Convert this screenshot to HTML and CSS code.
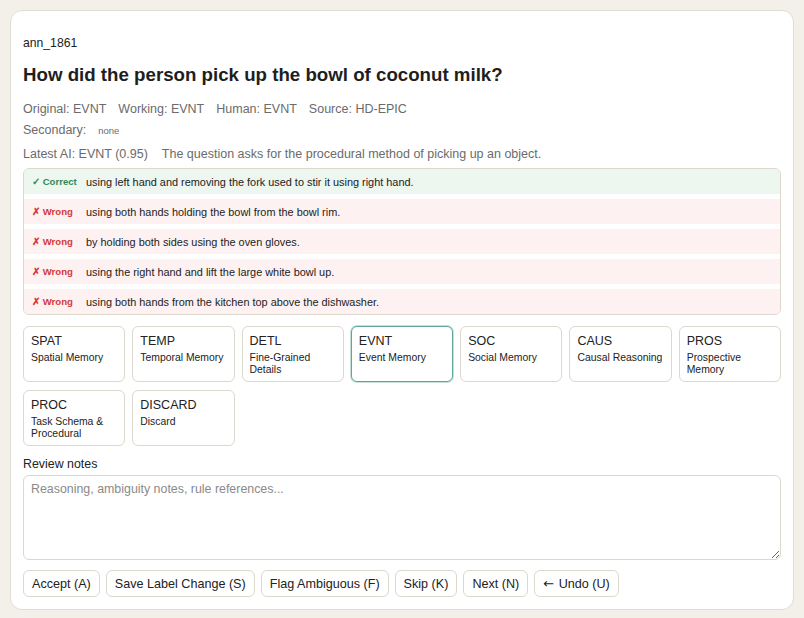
FILE: index.html
```html
<!DOCTYPE html>
<html lang="en">
<head>
<meta charset="utf-8">
<title>Review ann_1861</title>
<link rel="stylesheet" href="styles.css">
</head>
<body>
<main class="card">
  <div class="ann-id">ann_1861</div>
  <h1 class="question">How did the person pick up the bowl of coconut milk?</h1>
  <div class="meta">
    <span>Original: EVNT</span>
    <span>Working: EVNT</span>
    <span>Human: EVNT</span>
    <span>Source: HD-EPIC</span>
  </div>
  <div class="meta secondary">
    <span>Secondary:</span>
    <span class="none">none</span>
  </div>
  <div class="meta latest">
    <span>Latest AI: EVNT (0.95)</span>
    <span>The question asks for the procedural method of picking up an object.</span>
  </div>
  <div class="options">
    <div class="opt correct"><span class="tag">✓ Correct</span><span class="txt">using left hand and removing the fork used to stir it using right hand.</span></div>
    <div class="opt wrong"><span class="tag">✗ Wrong</span><span class="txt">using both hands holding the bowl from the bowl rim.</span></div>
    <div class="opt wrong"><span class="tag">✗ Wrong</span><span class="txt">by holding both sides using the oven gloves.</span></div>
    <div class="opt wrong"><span class="tag">✗ Wrong</span><span class="txt">using the right hand and lift the large white bowl up.</span></div>
    <div class="opt wrong"><span class="tag">✗ Wrong</span><span class="txt">using both hands from the kitchen top above the dishwasher.</span></div>
  </div>
  <div class="cats">
    <button class="cat"><span class="code">SPAT</span><span class="name">Spatial Memory</span></button>
    <button class="cat"><span class="code">TEMP</span><span class="name">Temporal Memory</span></button>
    <button class="cat"><span class="code">DETL</span><span class="name">Fine-Grained Details</span></button>
    <button class="cat selected"><span class="code">EVNT</span><span class="name">Event Memory</span></button>
    <button class="cat"><span class="code">SOC</span><span class="name">Social Memory</span></button>
    <button class="cat"><span class="code">CAUS</span><span class="name">Causal Reasoning</span></button>
    <button class="cat"><span class="code">PROS</span><span class="name">Prospective Memory</span></button>
    <button class="cat"><span class="code">PROC</span><span class="name">Task Schema &amp; Procedural</span></button>
    <button class="cat"><span class="code">DISCARD</span><span class="name">Discard</span></button>
  </div>
  <label class="notes-label" for="notes">Review notes</label>
  <textarea id="notes" class="notes" placeholder="Reasoning, ambiguity notes, rule references..."></textarea>
  <div class="actions">
    <button class="btn">Accept (A)</button>
    <button class="btn">Save Label Change (S)</button>
    <button class="btn">Flag Ambiguous (F)</button>
    <button class="btn">Skip (K)</button>
    <button class="btn">Next (N)</button>
    <button class="btn"><span class="arrow">←</span> Undo (U)</button>
  </div>
</main>
</body>
</html>
```
FILE: styles.css
```css
* { box-sizing: border-box; }
html, body { margin: 0; }
body {
  background: #f3f0ea;
  font-family: "Liberation Sans", Arial, sans-serif;
  color: #222;
  padding: 10px 10px 8px 10px;
}
.card {
  background: #fff;
  border: 1px solid #e2ddd2;
  border-radius: 12px;
  padding: 24px 12px 12px 12px;
  display: flex;
  flex-direction: column;
}
.ann-id {
  font-size: 12.2px;
  line-height: 16px;
}
.question {
  font-size: 18.7px;
  line-height: 24px;
  font-weight: bold;
  margin: 12px 0 0 0;
  color: #1e1e1e;
}
.meta {
  font-size: 12.5px;
  line-height: 16px;
  color: #6b6b6b;
  display: flex;
  gap: 12px;
  margin-top: 14px;
}
.meta.secondary { margin-top: 5px; align-items: baseline; }
.meta .none { font-size: 9.5px; }
.meta.latest { margin-top: 7px; gap: 14px; }
.options {
  margin-top: 6px;
  border: 1px solid #ddd8cc;
  border-radius: 6px;
  overflow: hidden;
  display: flex;
  flex-direction: column;
  gap: 5px;
}
.opt {
  height: 25px;
  display: flex;
  align-items: center;
  padding: 0 8px;
  font-size: 10.9px;
}
.opt.correct { background: #eef6f0; }
.opt.wrong { background: #fdf2f1; }
.tag {
  width: 54px;
  flex: none;
  font-size: 9.6px;
  font-weight: bold;
}
.correct .tag { color: #2e8b57; }
.wrong .tag { color: #d33a3a; }
.txt { color: #222; }
.cats {
  margin-top: 11px;
  display: grid;
  grid-template-columns: repeat(7, 1fr);
  gap: 8px 7px;
}
.cat {
  height: 56px;
  background: #fff;
  border: 1px solid #ddd8cc;
  border-radius: 6px;
  padding: 6px 7px;
  text-align: left;
  display: flex;
  flex-direction: column;
  align-items: flex-start;
  justify-content: flex-start;
  font-family: inherit;
  color: #222;
}
.cat.selected {
  border-color: #5fa696;
  box-shadow: 0 0 0 1px rgba(95,166,150,0.35);
}
.cat .code { font-size: 12.5px; line-height: 16px; }
.cat .name { font-size: 10.4px; line-height: 12px; margin-top: 3px; }
.notes-label {
  margin-top: 10px;
  font-size: 12.4px;
  line-height: 16px;
}
.notes {
  margin-top: 3px;
  height: 85px;
  border: 1px solid #ddd8cc;
  border-radius: 6px;
  padding: 6px 7px;
  font-family: inherit;
  font-size: 12.4px;
  color: #222;
  resize: vertical;
}
.notes::placeholder { color: #8a8a8a; }
.actions {
  margin-top: 10px;
  display: flex;
  gap: 6px;
}
.btn {
  height: 27px;
  padding: 0 8px;
  background: #fff;
  border: 1px solid #ddd8cc;
  border-radius: 6px;
  font-family: inherit;
  font-size: 12.6px;
  color: #222;
}
.arrow { font-family: "DejaVu Sans", sans-serif; font-size: 13px; margin-right: 1px; }
```
